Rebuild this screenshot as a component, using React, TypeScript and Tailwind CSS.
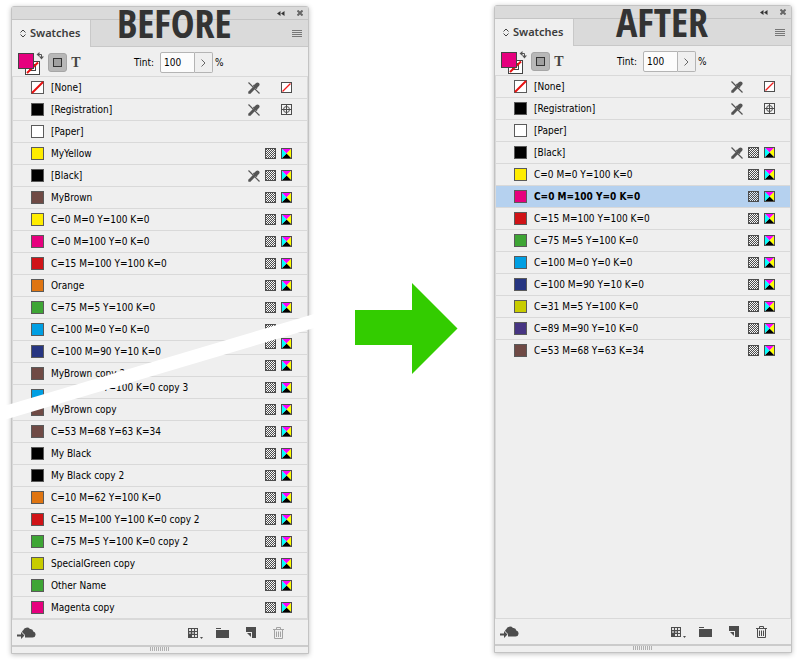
const RAW = {
  none: "#ffffff",
  black: "#000000",
  paper: "#ffffff",
  yellow: "#ffed00",
  brown: "#6f4a45",
  magenta: "#e6007e",
  red: "#d01317",
  orange: "#df7512",
  green: "#3ea535",
  cyan: "#009fe3",
  blue: "#263581",
  lime: "#c8cc00",
  violet: "#473583",
};

type Swatch = {
  name: string;
  color: keyof typeof RAW;
  kind?: "none" | "registration" | "paper";
  locked?: boolean;
  selected?: boolean;
};

const base: Swatch[] = [
  { name: "[None]", color: "none", kind: "none", locked: true },
  { name: "[Registration]", color: "black", kind: "registration", locked: true },
  { name: "[Paper]", color: "paper", kind: "paper" },
];

const beforeTop: Swatch[] = [
  ...base,
  { name: "MyYellow", color: "yellow" },
  { name: "[Black]", color: "black", locked: true },
  { name: "MyBrown", color: "brown" },
  { name: "C=0 M=0 Y=100 K=0", color: "yellow" },
  { name: "C=0 M=100 Y=0 K=0", color: "magenta" },
  { name: "C=15 M=100 Y=100 K=0", color: "red" },
  { name: "Orange", color: "orange" },
  { name: "C=75 M=5 Y=100 K=0", color: "green" },
  { name: "C=100 M=0 Y=0 K=0", color: "cyan" },
  { name: "C=100 M=90 Y=10 K=0", color: "blue" },
  { name: "MyBrown copy 2", color: "brown" },
  { name: "", color: "cyan" },
];

const beforeBottom: Swatch[] = [
  { name: "", color: "orange" },
  { name: "", color: "cyan" },
  { name: "C=75 M=5 Y=100 K=0 copy 3", color: "green" },
  { name: "MyBrown copy", color: "brown" },
  { name: "C=53 M=68 Y=63 K=34", color: "brown" },
  { name: "My Black", color: "black" },
  { name: "My Black copy 2", color: "black" },
  { name: "C=10 M=62 Y=100 K=0", color: "orange" },
  { name: "C=15 M=100 Y=100 K=0 copy 2", color: "red" },
  { name: "C=75 M=5 Y=100 K=0 copy 2", color: "green" },
  { name: "SpecialGreen copy", color: "lime" },
  { name: "Other Name", color: "green" },
  { name: "Magenta copy", color: "magenta" },
];

const after: Swatch[] = [
  ...base,
  { name: "[Black]", color: "black", locked: true },
  { name: "C=0 M=0 Y=100 K=0", color: "yellow" },
  { name: "C=0 M=100 Y=0 K=0", color: "magenta", selected: true },
  { name: "C=15 M=100 Y=100 K=0", color: "red" },
  { name: "C=75 M=5 Y=100 K=0", color: "green" },
  { name: "C=100 M=0 Y=0 K=0", color: "cyan" },
  { name: "C=100 M=90 Y=10 K=0", color: "blue" },
  { name: "C=31 M=5 Y=100 K=0", color: "lime" },
  { name: "C=89 M=90 Y=10 K=0", color: "violet" },
  { name: "C=53 M=68 Y=63 K=34", color: "brown" },
];

function LockIcon() {
  return (
    <svg width="12" height="12" viewBox="0 0 12 12" fill="none" stroke="#555">
      <path d="M1 11l5-5" strokeWidth="3" />
      <path d="M.5 11.500l2-2" strokeWidth="1.500" />
      <path d="M5.500 3l3.500 3.500" strokeWidth="1.500" />
      <path d="M7.500 4.500l2-2" strokeWidth="4" strokeLinecap="round" />
      <path d="M.5 .5l11 11" strokeWidth="1.200" />
    </svg>
  );
}

function NoneIcon() {
  return (
    <svg width="11" height="11" viewBox="0 0 11 11">
      <path d="M0 0h11v11H0z" fill="#4d4d4d" />
      <path d="M1 1h9v9H1z" fill="#fff" />
      <path d="M1.500 9.500l8-8" stroke="#f02020" strokeWidth="1.200" />
    </svg>
  );
}

function RegistrationIcon() {
  return (
    <svg width="11" height="11" viewBox="0 0 11 11" fill="none" stroke="#4d4d4d">
      <rect x=".5" y=".5" width="10" height="10" fill="#f4f4f4" />
      <circle cx="5.5" cy="5.5" r="3" />
      <path d="M5.5 1v9M1 5.5h9" />
    </svg>
  );
}

function TintIcon() {
  return (
    <svg width="11" height="11" viewBox="0 0 11 11" shapeRendering="crispEdges">
      <defs>
        <pattern id="checker" width="2" height="2" patternUnits="userSpaceOnUse">
          <path d="M0 0h1v1h-1zM1 1h1v1h-1z" fill="#4d4d4d" />
        </pattern>
      </defs>
      <rect x="1" y="1" width="9" height="9" fill="#fff" fillOpacity=".5" />
      <rect x="1" y="1" width="9" height="9" fill="url(#checker)" />
      <path d="M0 0h11v11H0zM1 1v9h9V1z" fill="#4d4d4d" fillRule="evenodd" />
    </svg>
  );
}

function CmykIcon() {
  return (
    <svg width="11" height="11" viewBox="0 0 11 11">
      <path d="M1 1h9L5.500 5.500z" fill="#ff00ff" />
      <path d="M10 1v9L5.500 5.500z" fill="#ffff00" />
      <path d="M1 10h9L5.500 5.500z" fill="#000" />
      <path d="M1 1v9L5.500 5.500z" fill="#00ffff" />
      <rect x=".5" y=".5" width="10" height="10" fill="none" stroke="#4d4d4d" />
    </svg>
  );
}

function SwatchRow({ swatch }: { swatch: Swatch }) {
  return (
    <li
      className={`flex h-[22px] items-center border-t border-[#d9d9d9] pr-[15px] pl-[18px] text-black ${
        swatch.selected ? "bg-[#b5d1ef] font-bold" : ""
      }`}
    >
      <svg width="13" height="13" viewBox="0 0 13 13" className="shrink-0">
        <rect x=".5" y=".5" width="12" height="12" fill={RAW[swatch.color]} stroke="#5a5a5a" />
        {swatch.kind === "none" && <path d="M1 12L12 1" stroke="#e81010" strokeWidth="2" />}
      </svg>
      <span className="ml-[7px] flex-1 whitespace-nowrap">{swatch.name}</span>
      <span className="flex items-center gap-[5px]">
        {swatch.locked && <LockIcon />}
        {swatch.kind ? <span className="w-[11px]" /> : <TintIcon />}
        {swatch.kind === "none" && <NoneIcon />}
        {swatch.kind === "registration" && <RegistrationIcon />}
        {!swatch.kind && <CmykIcon />}
      </span>
    </li>
  );
}

function FillStroke() {
  return (
    <svg width="26" height="27" viewBox="0 2 26 27" fill="none">
      <rect x="7.500" y="14.500" width="14" height="13" fill="#fff" stroke="#444" />
      <rect x="11.500" y="17.500" width="6" height="6" stroke="#444" />
      <path d="M9 26L20 15.500" stroke="#e81010" strokeWidth="2" />
      <rect x=".5" y="6.500" width="15" height="15" fill="#e6007e" stroke="#444" />
      <path d="M21 7.500h2.500V10" stroke="#555" />
      <path d="M18.500 7.500L21.500 5v5zM21 9.500h5L23.500 12.500z" fill="#555" />
    </svg>
  );
}

function PanelHeader({ id }: { id: string }) {
  return (
    <>
      <div className="flex h-[13px] items-center justify-end gap-3 border-b border-[#c4c4c4] bg-[#dadada] pr-[5px]">
        <button aria-label="Collapse">
          <svg width="8" height="5" viewBox="0 0 8 5" fill="#333">
            <path d="M3.500 0v5L0 2.500zM7.500 0v5L4 2.500z" />
          </svg>
        </button>
        <button aria-label="Close">
          <svg width="6" height="6" viewBox="0 0 6 6" stroke="#666" strokeWidth="2">
            <path d="M.5.5l5 5M5.500.5l-5 5" />
          </svg>
        </button>
      </div>
      <div className="flex h-[27px]">
        <button className="flex w-[78px] items-center gap-1 bg-[#efefef] pl-2 font-['Noto_Sans',sans-serif] text-[11px] font-semibold text-[#3c3c3c]">
          <svg width="6" height="9" viewBox="0 0 6 9" fill="none" stroke="#444">
            <path d="M.5 3.500L3 1l2.500 2.500M.5 5.500L3 8l2.500-2.500" />
          </svg>
          Swatches
        </button>
        <div className="flex flex-1 items-center justify-end border-b border-l border-[#c8c8c8] bg-[#dadada] pr-[6px]">
          <button aria-label="Panel menu">
            <svg width="10" height="7" viewBox="0 0 10 7" stroke="#777">
              <path d="M0 .5h10M0 2.500h10M0 4.500h10M0 6.500h10" />
            </svg>
          </button>
        </div>
      </div>
      <div className="flex h-[29px] items-center pt-[2px] pl-[6px]">
        <button aria-label="Fill and stroke">
          <FillStroke />
        </button>
        <button
          aria-label="Formatting affects container"
          className="ml-1 flex size-[19px] items-center justify-center rounded-[3px] border border-[#a6a6a6] bg-[#b8b8b8]"
        >
          <span className="size-[9px] border border-[#333] bg-[#a0a0a0]" />
        </button>
        <button
          aria-label="Formatting affects text"
          className="ml-1 w-[10px] font-['Liberation_Serif',serif] text-sm font-bold text-[#444]"
        >
          T
        </button>
        <label htmlFor={id} className="ml-[53px] w-[26px] text-black">
          Tint:
        </label>
        <input
          id={id}
          defaultValue="100"
          className="h-[21px] w-[35px] rounded-l-[2px] border border-[#b4b4b4] bg-[#fcfcfc] pl-[3px] text-black"
        />
        <button
          aria-label="Tint slider"
          className="flex h-[21px] w-[18px] items-center justify-center rounded-r-[2px] border border-l-0 border-[#b4b4b4]"
        >
          <svg width="5" height="8" viewBox="0 0 5 8" fill="none" stroke="#666">
            <path d="M.5.5L4 4 .5 7.500" />
          </svg>
        </button>
        <span className="ml-[2px] text-black">%</span>
      </div>
    </>
  );
}

function PanelFooter({ canDelete }: { canDelete?: boolean }) {
  return (
    <>
      <div className="flex h-[25px] items-center pr-6 pl-[5px] text-[#4d4d4d]">
        <button aria-label="Add to library">
          <svg width="19" height="12" viewBox="0 0 19 12" fill="currentColor">
            <path d="M8 10.500h7.500a3 3 0 0 0 .8-5.900A3 3 0 0 0 13 2a4 4 0 0 0-6.800 1.200A2.500 2.500 0 0 0 5 5l3 3z" />
            <path d="M0 7.500h4V5l3.500 3.500L4 12V9.500H0z" />
          </svg>
        </button>
        <div className="flex-1" />
        <button aria-label="Swatch views">
          <svg width="16" height="12" viewBox="0 0 16 12" fill="currentColor">
            <path d="M0 1h10v10H0z" />
            <path d="M1 2h2v2H1zM4 2h2v2H4zM7 2h2v2H7zM7 5h2v2H7zM4 8h2v2H4zM7 8h2v2H7z" fill="#e4e4e4" />
            <path d="M1 5h2v2H1zM4 5h2v2H4z" fill="#aaa" />
            <path d="M12 10h3l-1.500 2z" />
          </svg>
        </button>
        <button aria-label="New color group" className="ml-3">
          <svg width="13" height="10" viewBox="0 0 13 10" fill="currentColor">
            <path d="M0 0h5v1H0zM0 2h13v8H0z" />
          </svg>
        </button>
        <button aria-label="New swatch" className="ml-[17px]">
          <svg width="10" height="11" viewBox="0 0 10 11" fill="currentColor">
            <path d="M0 0h10v11H6V5H0zM1 6h4v4z" />
          </svg>
        </button>
        <button aria-label="Delete swatch" disabled={!canDelete} className={canDelete ? "ml-[17px]" : "ml-[17px] text-[#a3a3a3]"}>
          <svg width="11" height="12" viewBox="0 0 11 12" fill="none" stroke="currentColor">
            <path d="M0 2.500h11M3.500 2V.5h4V2M1.500 3v8.500h8V3M3.500 4.500V10M5.500 4.500V10M7.500 4.500V10" />
          </svg>
        </button>
      </div>
      <div className="flex h-2 justify-center border-t-2 border-[#cbcbcb]">
        <svg width="20" height="5" viewBox="0 0 20 5" stroke="#b0b0b0">
          <path d="M.5 0v4M2.500 0v4M4.500 0v4M6.500 0v4M8.500 0v4M10.500 0v4M12.500 0v4M14.500 0v4M16.500 0v4M18.500 0v4" />
        </svg>
      </div>
    </>
  );
}

export default function App() {
  return (
    <main className="flex bg-white pt-[5px] pr-2 pb-2 pl-[11px] font-['DejaVu_Sans_Condensed','DejaVu_Sans',sans-serif] text-[10px]">
      {/* Before */}
      <section className="relative mt-px flex flex-1 flex-col rounded-t-[3px] border border-[#c3c3c3] bg-[#efefef] shadow-[0_1px_5px_rgba(0,0,0,0.25)]">
        <h2 className="absolute -top-1 left-[105px] font-['Open_Sans_Condensed','Roboto_Condensed','Liberation_Sans_Narrow',sans-serif] text-[40px] leading-10 font-bold text-[#333]">
          BEFORE
        </h2>
        <PanelHeader id="tint-before" />
        <div className="grid flex-1 border-x border-b-2 border-[#d9d9d9]">
          <ul className="col-start-1 row-start-1 [clip-path:polygon(0_0,100%_0,100%_247px,0_333px)]">
            {beforeTop.map((s, i) => (
              <SwatchRow key={i} swatch={s} />
            ))}
          </ul>
          <ul className="col-start-1 row-start-1 mt-[256px] [clip-path:polygon(100%_-9px,0_77px,0_100%,100%_100%)]">
            {beforeBottom.map((s, i) => (
              <SwatchRow key={i} swatch={s} />
            ))}
          </ul>
        </div>
        <PanelFooter />
        {/* torn gap between the two halves of the list */}
        <div className="absolute top-[307px] -right-[6px] -left-[8px] h-[107px] bg-white [clip-path:polygon(0_92px,100%_0,100%_14px,0_106px)]" />
      </section>

      <svg width="103" height="92" viewBox="0 0 103 92" className="mt-[278px] mr-9 ml-[46px] shrink-0" fill="#33cc00">
        <path d="M0 27h57V0l45.500 45.500L57 91V62H0z" />
      </svg>

      {/* After */}
      <section className="relative mb-px flex flex-1 flex-col rounded-t-[3px] border border-[#c3c3c3] bg-[#efefef] shadow-[0_1px_5px_rgba(0,0,0,0.25)]">
        <h2 className="absolute -top-1 left-[121px] font-['Open_Sans_Condensed','Roboto_Condensed','Liberation_Sans_Narrow',sans-serif] text-[40px] leading-10 font-bold text-[#333]">
          AFTER
        </h2>
        <PanelHeader id="tint-after" />
        <ul className="flex-1 border-x border-b border-[#d9d9d9]">
          {after.map((s, i) => (
            <SwatchRow key={i} swatch={s} />
          ))}
        </ul>
        <PanelFooter canDelete />
      </section>
    </main>
  );
}
